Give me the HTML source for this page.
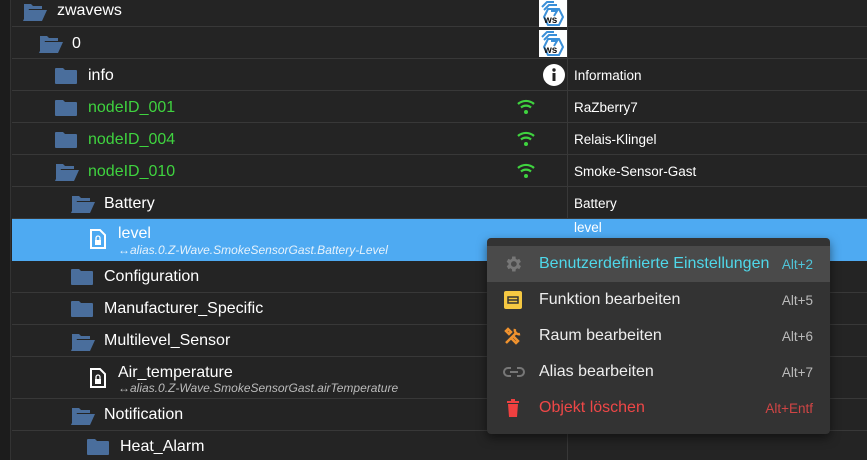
<!DOCTYPE html>
<html><head><meta charset="utf-8"><style>
*{margin:0;padding:0;box-sizing:border-box}
body{width:867px;height:460px;overflow:hidden;background:#242424;font-family:"Liberation Sans",Arial,sans-serif;position:relative;color:#fff}
.strip{position:absolute;left:0;top:0;width:11px;height:460px;background:#1c1c1c;border-right:1px solid #333}
.sep{position:absolute;left:12px;right:0;height:1px;background:#383838}
.col{position:absolute;left:567px;top:0;width:1px;height:460px;background:#383838}
.t{position:absolute;font-size:16px;white-space:nowrap}
.g{color:#3fd33f}
.r{position:absolute;left:574px;font-size:13.5px;white-space:nowrap}
.sub{position:absolute;font-size:12px;font-style:italic;color:#bbb;white-space:nowrap}
svg.f{position:absolute}
.sel{position:absolute;left:12px;top:219px;width:855px;height:42px;background:#4eaaf2}
.menu{position:absolute;left:487px;top:238px;width:343px;height:196px;background:#333;border-radius:4px;box-shadow:0 4px 10px rgba(0,0,0,.5)}
.mi{position:absolute;left:0;width:343px;height:36px;font-size:16px}
.mi .lb{position:absolute;left:52px;top:9px;color:#eee}
.mi .k{position:absolute;right:17px;top:11px;font-size:13.5px;color:#bbb}
.mi svg{position:absolute;left:16px;top:8px}
.logo{position:absolute;left:539px;width:28px;height:27px;background:#fff}
</style></head><body>
<div class="strip"></div>
<div class="sep" style="top:26px"></div><div class="sep" style="top:58px"></div><div class="sep" style="top:90px"></div><div class="sep" style="top:122px"></div><div class="sep" style="top:154px"></div><div class="sep" style="top:186px"></div><div class="sep" style="top:218px"></div>
<div class="sep" style="top:292px"></div><div class="sep" style="top:324px"></div><div class="sep" style="top:356px"></div><div class="sep" style="top:398px"></div><div class="sep" style="top:430px"></div>
<div class="col"></div>
<div class="sel"></div>

<svg class="f" style="left:22px;top:2px" width="26" height="20" viewBox="0 0 26 20"><path d="M2 2h7l2 2h9v3H7L2 18z" fill="#4a6e9c"/><path d="M6 8h19l-5 11H1z" fill="#4a6e9c"/></svg>
<div class="t" style="left:57px;top:2px">zwavews</div>
<div class="logo" style="top:0"><svg width="28" height="27" viewBox="0 0 28 27"><path d="M3 7l5-5h7M5 10l5-5h8" stroke="#3a8fd8" stroke-width="2" fill="none"/><path d="M9 9h11l4 8-4 8H9l-4-8z" stroke="#3a8fd8" stroke-width="2" fill="none"/><path d="M12 11h6l-3 5" stroke="#3a8fd8" stroke-width="2" fill="none"/><text x="5" y="23" font-size="10" font-weight="bold" fill="#111" font-family="Liberation Sans">ws</text></svg></div>

<svg class="f" style="left:38px;top:34px" width="26" height="20" viewBox="0 0 26 20"><path d="M2 2h7l2 2h9v3H7L2 18z" fill="#4a6e9c"/><path d="M6 8h19l-5 11H1z" fill="#4a6e9c"/></svg>
<div class="t" style="left:72px;top:35px">0</div>
<div class="logo" style="top:30px"><svg width="28" height="27" viewBox="0 0 28 27"><path d="M3 7l5-5h7M5 10l5-5h8" stroke="#3a8fd8" stroke-width="2" fill="none"/><path d="M9 9h11l4 8-4 8H9l-4-8z" stroke="#3a8fd8" stroke-width="2" fill="none"/><path d="M12 11h6l-3 5" stroke="#3a8fd8" stroke-width="2" fill="none"/><text x="5" y="23" font-size="10" font-weight="bold" fill="#111" font-family="Liberation Sans">ws</text></svg></div>

<svg class="f" style="left:54px;top:67px" width="24" height="18" viewBox="0 0 24 18"><path d="M1 2a1 1 0 0 1 1-1h7l2 2h11a1 1 0 0 1 1 1v12a1 1 0 0 1-1 1H2a1 1 0 0 1-1-1z" fill="#4a6e9c"/></svg>
<div class="t" style="left:88px;top:67px">info</div>
<svg class="f" style="left:543px;top:64px" width="22" height="22" viewBox="0 0 22 22"><circle cx="11" cy="11" r="11" fill="#fff"/><rect x="9.5" y="9" width="3" height="8" fill="#222"/><circle cx="11" cy="6" r="1.7" fill="#222"/></svg>
<div class="r" style="top:68px">Information</div>

<svg class="f" style="left:54px;top:99px" width="24" height="18" viewBox="0 0 24 18"><path d="M1 2a1 1 0 0 1 1-1h7l2 2h11a1 1 0 0 1 1 1v12a1 1 0 0 1-1 1H2a1 1 0 0 1-1-1z" fill="#4a6e9c"/></svg>
<div class="t g" style="left:88px;top:99px">nodeID_001</div>
<div class="r" style="top:100px">RaZberry7</div>

<svg class="f" style="left:54px;top:131px" width="24" height="18" viewBox="0 0 24 18"><path d="M1 2a1 1 0 0 1 1-1h7l2 2h11a1 1 0 0 1 1 1v12a1 1 0 0 1-1 1H2a1 1 0 0 1-1-1z" fill="#4a6e9c"/></svg>
<div class="t g" style="left:88px;top:131px">nodeID_004</div>
<div class="r" style="top:132px">Relais-Klingel</div>

<svg class="f" style="left:54px;top:162px" width="26" height="20" viewBox="0 0 26 20"><path d="M2 2h7l2 2h9v3H7L2 18z" fill="#4a6e9c"/><path d="M6 8h19l-5 11H1z" fill="#4a6e9c"/></svg>
<div class="t g" style="left:88px;top:163px">nodeID_010</div>
<div class="r" style="top:164px">Smoke-Sensor-Gast</div>

<svg class="f" style="left:516px;top:99px" width="20" height="16" viewBox="0 0 20 16"><path d="M2 5a12 12 0 0 1 16 0M5 8.5a7.5 7.5 0 0 1 10 0" stroke="#3fd33f" stroke-width="2.2" fill="none"/><circle cx="10" cy="13" r="2" fill="#3fd33f"/></svg>
<svg class="f" style="left:516px;top:131px" width="20" height="16" viewBox="0 0 20 16"><path d="M2 5a12 12 0 0 1 16 0M5 8.5a7.5 7.5 0 0 1 10 0" stroke="#3fd33f" stroke-width="2.2" fill="none"/><circle cx="10" cy="13" r="2" fill="#3fd33f"/></svg>
<svg class="f" style="left:516px;top:163px" width="20" height="16" viewBox="0 0 20 16"><path d="M2 5a12 12 0 0 1 16 0M5 8.5a7.5 7.5 0 0 1 10 0" stroke="#3fd33f" stroke-width="2.2" fill="none"/><circle cx="10" cy="13" r="2" fill="#3fd33f"/></svg>

<svg class="f" style="left:70px;top:194px" width="26" height="20" viewBox="0 0 26 20"><path d="M2 2h7l2 2h9v3H7L2 18z" fill="#4a6e9c"/><path d="M6 8h19l-5 11H1z" fill="#4a6e9c"/></svg>
<div class="t" style="left:104px;top:195px">Battery</div>
<div class="r" style="top:196px">Battery</div>

<svg class="f" style="left:90px;top:229px" width="16" height="20" viewBox="0 0 16 20"><path d="M1 1h9l5 5v13H1z" fill="none" stroke="#fff" stroke-width="2"/><rect x="5" y="11" width="6" height="5" fill="#fff"/><path d="M6 11V9a2 2 0 0 1 4 0v2" stroke="#fff" stroke-width="1.3" fill="none"/></svg>
<div class="t" style="left:118px;top:225px">level</div>
<div class="sub" style="left:118px;top:243px;color:#e6f2fc">↔alias.0.Z-Wave.SmokeSensorGast.Battery-Level</div>
<div class="r" style="top:220px">level</div>

<svg class="f" style="left:70px;top:268px" width="24" height="18" viewBox="0 0 24 18"><path d="M1 2a1 1 0 0 1 1-1h7l2 2h11a1 1 0 0 1 1 1v12a1 1 0 0 1-1 1H2a1 1 0 0 1-1-1z" fill="#4a6e9c"/></svg>
<div class="t" style="left:104px;top:268px">Configuration</div>
<svg class="f" style="left:70px;top:300px" width="24" height="18" viewBox="0 0 24 18"><path d="M1 2a1 1 0 0 1 1-1h7l2 2h11a1 1 0 0 1 1 1v12a1 1 0 0 1-1 1H2a1 1 0 0 1-1-1z" fill="#4a6e9c"/></svg>
<div class="t" style="left:104px;top:300px">Manufacturer_Specific</div>
<svg class="f" style="left:70px;top:332px" width="26" height="20" viewBox="0 0 26 20"><path d="M2 2h7l2 2h9v3H7L2 18z" fill="#4a6e9c"/><path d="M6 8h19l-5 11H1z" fill="#4a6e9c"/></svg>
<div class="t" style="left:104px;top:332px">Multilevel_Sensor</div>

<svg class="f" style="left:90px;top:368px" width="16" height="20" viewBox="0 0 16 20"><path d="M1 1h9l5 5v13H1z" fill="none" stroke="#fff" stroke-width="2"/><rect x="5" y="11" width="6" height="5" fill="#fff"/><path d="M6 11V9a2 2 0 0 1 4 0v2" stroke="#fff" stroke-width="1.3" fill="none"/></svg>
<div class="t" style="left:118px;top:364px">Air_temperature</div>
<div class="sub" style="left:118px;top:381px">↔alias.0.Z-Wave.SmokeSensorGast.airTemperature</div>

<svg class="f" style="left:70px;top:406px" width="26" height="20" viewBox="0 0 26 20"><path d="M2 2h7l2 2h9v3H7L2 18z" fill="#4a6e9c"/><path d="M6 8h19l-5 11H1z" fill="#4a6e9c"/></svg>
<div class="t" style="left:104px;top:406px">Notification</div>
<svg class="f" style="left:86px;top:438px" width="24" height="18" viewBox="0 0 24 18"><path d="M1 2a1 1 0 0 1 1-1h7l2 2h11a1 1 0 0 1 1 1v12a1 1 0 0 1-1 1H2a1 1 0 0 1-1-1z" fill="#4a6e9c"/></svg>
<div class="t" style="left:120px;top:438px">Heat_Alarm</div>

<div class="menu">
 <div class="mi" style="top:8px;background:#4a4a4a">
  <svg width="20" height="20" viewBox="0 0 24 24"><path fill="#777" d="M19.4 13a7.5 7.5 0 0 0 0-2l2.1-1.6-2-3.5-2.5 1a7 7 0 0 0-1.7-1L15 3h-4l-.4 2.9a7 7 0 0 0-1.7 1l-2.5-1-2 3.5L6.6 11a7.5 7.5 0 0 0 0 2l-2.1 1.6 2 3.5 2.5-1a7 7 0 0 0 1.7 1L11 21h4l.4-2.9a7 7 0 0 0 1.700-1l2.5 1 2-3.5zM13 15.5a3.5 3.5 0 1 1 0-7 3.5 3.5 0 0 1 0 7z"/></svg>
  <span class="lb" style="color:#4fd8ea">Benutzerdefinierte Einstellungen</span><span class="k" style="color:#4fc4d8">Alt+2</span></div>
 <div class="mi" style="top:44px">
  <svg width="20" height="20" viewBox="0 0 20 20"><rect x="1" y="1" width="18" height="18" rx="2" fill="#f5c842"/><path d="M5 7h10v6H5zM5 10h10" stroke="#333" stroke-width="1.5" fill="none"/></svg>
  <span class="lb">Funktion bearbeiten</span><span class="k">Alt+5</span></div>
 <div class="mi" style="top:80px">
  <svg width="20" height="20" viewBox="0 0 20 20"><path d="M3 17L13 7M5 3l3 3-2 2-3-3zM12 3a4 4 0 0 0 5 5M8 12l5 5 2-2-5-5" stroke="#f0922e" stroke-width="2.5" fill="none"/></svg>
  <span class="lb">Raum bearbeiten</span><span class="k">Alt+6</span></div>
 <div class="mi" style="top:116px">
  <svg width="22" height="20" viewBox="0 0 22 20"><path d="M8 6H5a4 4 0 0 0 0 8h3M14 6h3a4 4 0 0 1 0 8h-3M7 10h8" stroke="#777" stroke-width="2" fill="none"/></svg>
  <span class="lb">Alias bearbeiten</span><span class="k">Alt+7</span></div>
 <div class="mi" style="top:152px">
  <svg width="20" height="20" viewBox="0 0 20 20"><path d="M5 6h10l-1 13H6zM4 3h12v2H4zM8 1h4v2H8z" fill="#ef4040"/></svg>
  <span class="lb" style="color:#ef4747">Objekt löschen</span><span class="k" style="color:#d04545">Alt+Entf</span></div>
</div>
</body></html>
